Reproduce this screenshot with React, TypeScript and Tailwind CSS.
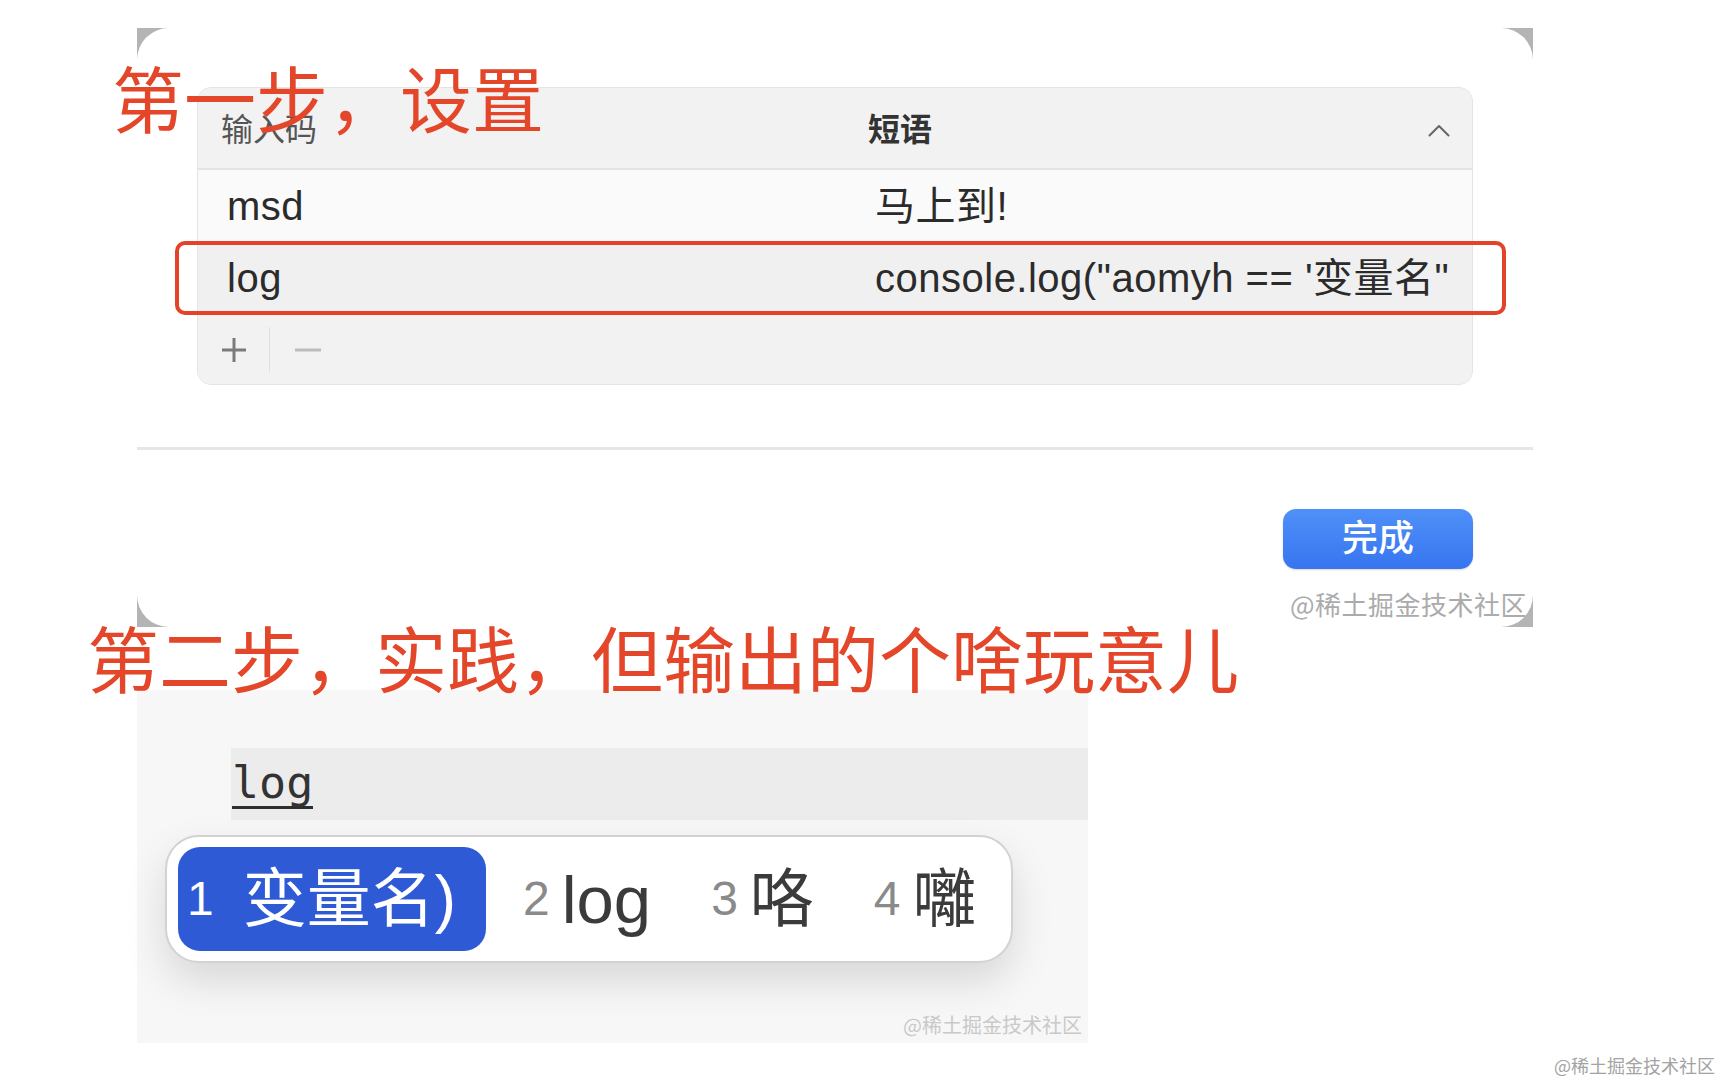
export default function App() {
  return (
    <div className="relative w-[1722px] h-[1086px] overflow-hidden bg-white font-['Liberation_Sans','Noto_Sans_CJK_SC',sans-serif]">
      <div className="pl-[137px] pt-[28px]">
        {/* top screenshot */}
        <div className="relative w-[1396px] h-[599px] bg-[#b4b4b4]">
          <div className="flex h-full flex-col rounded-[32px] bg-white">
            <div className="pl-[60px] pt-[59px]">
              <div className="flex h-[298px] w-[1276px] flex-col overflow-hidden rounded-[14px] border border-[#e4e4e4] bg-[#f2f2f2]">
                {/* header */}
                <div className="grid h-[82px] shrink-0 grid-cols-[647px_1fr] items-center border-b-2 border-[#e3e3e3] bg-[#f2f2f2] pl-[23px] text-[32px] leading-none">
                  <span className="mt-[3px] text-[#555]">输入码</span>
                  <div className="mt-[3px] flex items-center justify-between pr-[22px]">
                    <span className="font-bold text-[#333]">短语</span>
                    <svg width="22" height="13" viewBox="0 0 22 13" className="mt-[2px]">
                      <polyline points="1.5,11.5 11,2 20.5,11.5" fill="none" stroke="#666" strokeWidth="2" strokeLinecap="round" strokeLinejoin="round" />
                    </svg>
                  </div>
                </div>
                {/* row 1 */}
                <div className="grid h-[71px] shrink-0 grid-cols-[648px_1fr] items-center bg-[#fafafa] pl-[29px] text-[40px] leading-none tracking-[0.5px] text-[#2b2b2b]">
                  <span>msd</span>
                  <span>马上到!</span>
                </div>
                {/* row 2 */}
                <div className="grid h-[74px] shrink-0 grid-cols-[648px_1fr] items-center bg-[#f0f0f0] pl-[29px] text-[40px] leading-none tracking-[0.5px] text-[#2b2b2b]">
                  <span>log</span>
                  <span className="whitespace-nowrap">console.log("aomyh == '变量名"</span>
                </div>
                {/* footer */}
                <div className="flex flex-1 items-center bg-[#f2f2f2]">
                  <div className="flex w-[71px] justify-center">
                    <svg width="28" height="28" viewBox="0 0 28 28">
                      <path d="M14 2 V26 M2 14 H26" stroke="#7a7a7a" strokeWidth="3" />
                    </svg>
                  </div>
                  <div className="h-[45px] w-px bg-[#e0e0e0]" />
                  <div className="flex w-[76px] justify-center">
                    <svg width="26" height="4" viewBox="0 0 26 4">
                      <path d="M0 2 H26" stroke="#bdbdbd" strokeWidth="3" />
                    </svg>
                  </div>
                </div>
              </div>
            </div>
            {/* separator */}
            <div className="mt-[62px] h-[3px] w-full bg-[#e6e6e6]" />
            {/* button */}
            <div className="flex justify-end pr-[60px] pt-[59px]">
              <div className="flex h-[60px] w-[190px] items-center justify-center rounded-[13px] bg-linear-to-b from-[#4f90f8] to-[#3775f0] text-[36px] font-medium leading-none text-white shadow-[0_1px_2px_rgba(0,0,0,0.15)]">
                完成
              </div>
            </div>
            <div className="flex justify-end pr-[6px] pt-[22px]">
              <span className="font-['Noto_Sans_CJK_SC',serif] text-[26px] leading-none tracking-[0.5px] text-[#ababab]">@稀土掘金技术社区</span>
            </div>
          </div>
          {/* red highlight */}
          <div className="absolute left-[38px] top-[213px] h-[74px] w-[1331px] rounded-[10px] border-[4px] border-[#e4432a]" />
        </div>

        {/* bottom screenshot */}
        <div className="mt-[63px] flex h-[353px] w-[951px] flex-col bg-[#f7f7f7] pt-[58px]">
          <div className="ml-[94px] flex h-[72px] items-center bg-[#ececec] pl-[1px]">
            <span className="inline-block border-b-[3px] border-[#2e2e2e] font-['DejaVu_Sans_Mono',monospace] text-[45px] leading-[46px] text-[#333]">
              log
            </span>
          </div>
          <div className="ml-[28px] mt-[15px] flex h-[128px] w-[848px] items-center rounded-[34px] border-2 border-[#d2d2d2] bg-white pl-[11px] shadow-[0_18px_40px_rgba(0,0,0,0.13)]">
            <div className="flex h-[104px] w-[308px] items-center rounded-[22px] bg-[#2e5bd5] pl-[9px] text-white">
              <span className="text-[48px] leading-none">1</span>
              <span className="ml-[29px] text-[64px] leading-none">变量名)</span>
            </div>
            <span className="ml-[37px] text-[48px] leading-none text-[#8a8a8a]">2</span>
            <span className="ml-[12px] text-[67px] leading-none text-[#3b3b3b]">log</span>
            <span className="ml-[60px] text-[48px] leading-none text-[#8a8a8a]">3</span>
            <span className="ml-[12px] text-[64px] leading-none text-[#3b3b3b]">咯</span>
            <span className="ml-[60px] text-[48px] leading-none text-[#8a8a8a]">4</span>
            <span className="ml-[12px] text-[64px] leading-none text-[#3b3b3b]">囄</span>
          </div>
          <div className="mt-auto flex justify-end pb-[8px] pr-[6px]">
            <span className="font-['Noto_Sans_CJK_SC',serif] text-[20px] leading-none text-[#c9c9c9]">@稀土掘金技术社区</span>
          </div>
        </div>
      </div>

      {/* page watermark */}
      <div className="flex justify-end pr-[7px] pt-[13px]">
        <span className="font-['Noto_Sans_CJK_SC',serif] text-[18px] leading-none text-[#a3a3a3]">@稀土掘金技术社区</span>
      </div>

      {/* annotations */}
      <div className="absolute left-[112px] top-[60px] whitespace-nowrap font-['Noto_Sans_CJK_SC',sans-serif] text-[72px] leading-none text-[#e4462a]">
        第一步，设置
      </div>
      <div className="absolute left-[87px] top-[620px] whitespace-nowrap font-['Noto_Sans_CJK_SC',sans-serif] text-[72px] leading-none text-[#e4462a]">
        第二步，实践，但输出的个啥玩意儿
      </div>
    </div>
  );
}
